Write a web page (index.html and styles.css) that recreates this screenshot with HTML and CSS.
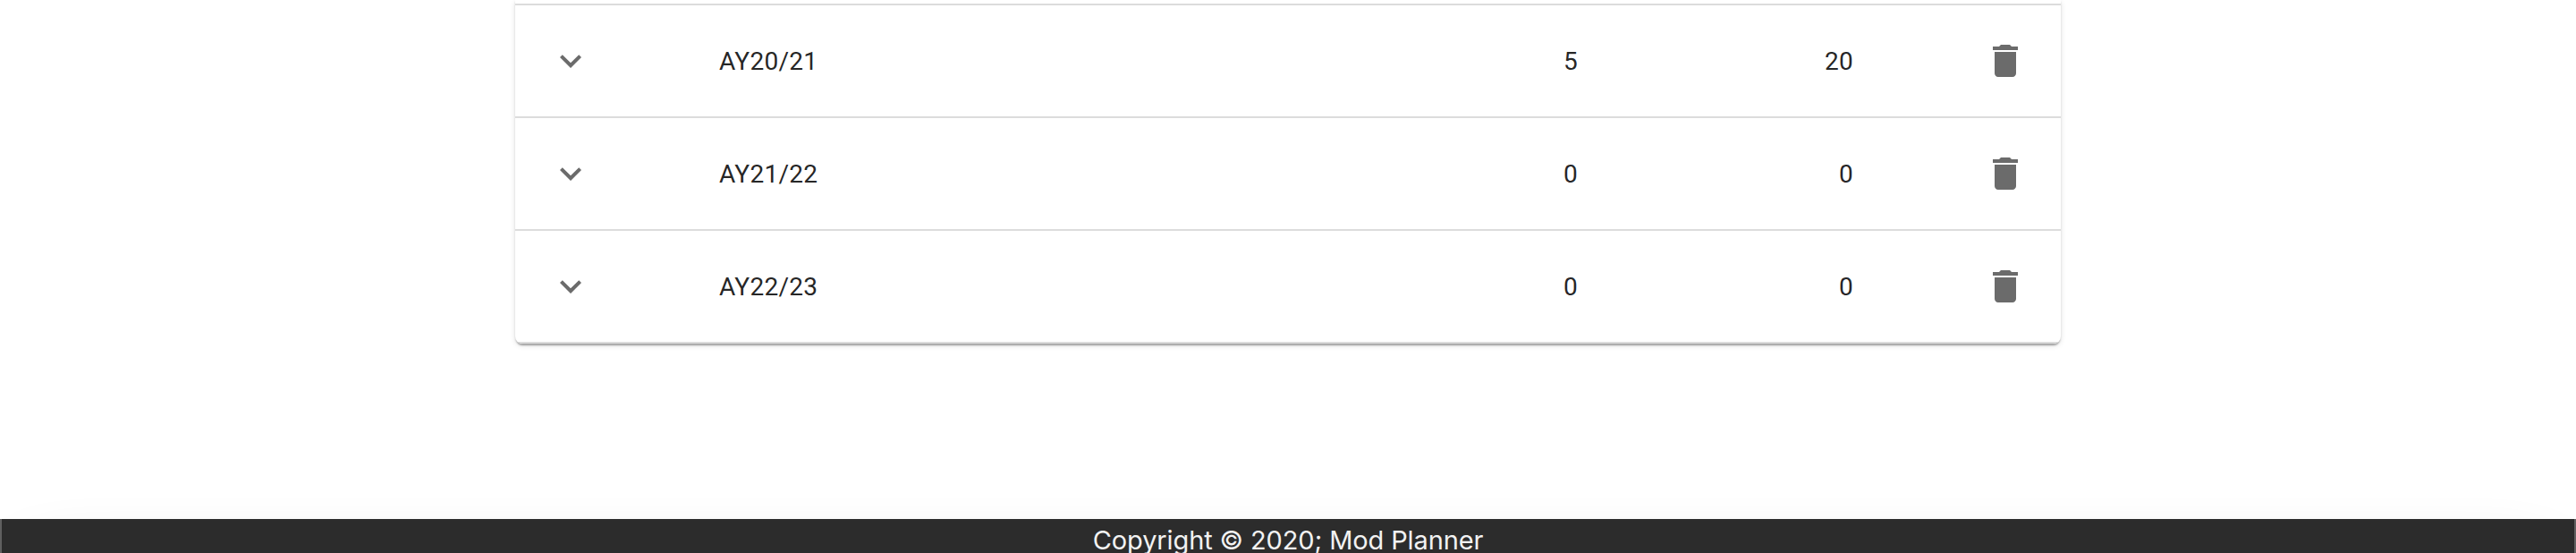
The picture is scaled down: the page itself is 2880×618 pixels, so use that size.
FILE: index.html
```
<!DOCTYPE html>
<html lang="en">
<head>
<meta charset="utf-8">
<title>Mod Planner</title>
<link rel="stylesheet" href="styles.css">
</head>
<body>
<svg class="sprite" aria-hidden="true">
  <symbol id="chevron" viewBox="0 0 24 24"><path d="M7.41 8.59L12 13.17l4.59-4.58L18 10l-6 6-6-6 1.41-1.41z"/></symbol>
  <symbol id="trash" viewBox="0 0 24 24"><path d="M6 19c0 1.1.9 2 2 2h8c1.1 0 2-.9 2-2V7H6v12zM19 4h-3.5l-1-1h-5l-1 1H5v2h14V4z"/></symbol>
</svg>
<main class="content">
  <div class="table">
    <div class="table-head"></div>
    <div class="row">
      <svg class="icon"><use href="#chevron"/></svg>
      <span class="year">AY20/21</span><span class="num">5</span><span class="num">20</span>
      <svg class="icon delete"><use href="#trash"/></svg>
    </div>
    <div class="row">
      <svg class="icon"><use href="#chevron"/></svg>
      <span class="year">AY21/22</span><span class="num">0</span><span class="num">0</span>
      <svg class="icon delete"><use href="#trash"/></svg>
    </div>
    <div class="row">
      <svg class="icon"><use href="#chevron"/></svg>
      <span class="year">AY22/23</span><span class="num">0</span><span class="num">0</span>
      <svg class="icon delete"><use href="#trash"/></svg>
    </div>
  </div>
</main>
<footer class="footer"><span class="copyright">Copyright © 2020; Mod Planner</span></footer>
</body>
</html>
```
FILE: styles.css
```
* { box-sizing: border-box; }
html { overflow: hidden; }
body {
  margin: 0;
  height: 618px;
  overflow: hidden;
  background: #fff;
  display: flex;
  flex-direction: column;
}
.sprite { display: none; }
.content { height: 580px; flex: none; }
.table {
  width: 1728px;
  margin: 0 auto;
  background: #fff;
  border-radius: 0 0 8px 8px;
  box-shadow: 0 4px 2px -2px rgba(0,0,0,.2), 0 2px 2px 0 rgba(0,0,0,.14), 0 2px 6px 0 rgba(0,0,0,.12);
  overflow: hidden;
}
.table-head { height: 6px; border-bottom: 2px solid #dcdcdc; }
.row {
  height: 126px;
  border-bottom: 2px solid #dcdcdc;
  padding: 0 38px;
  display: grid;
  grid-template-columns: 190px 690px 270px 308px 1fr;
  align-items: center;
  font: 28px/40px Roboto, sans-serif;
  letter-spacing: .3px;
  color: rgba(0,0,0,.87);
}
.year, .num { padding-top: 2px; }
.num { text-align: right; }
.icon { width: 48px; height: 48px; fill: #6b6b6b; }
.delete { justify-self: end; }
.footer {
  height: 200px;
  flex: none;
  background: #2c2c2c;
  border: solid #606060;
  border-width: 0 2px;
  box-shadow: 0 20px 80px -40px rgba(0,0,0,.3);
  text-align: center;
}
.copyright { display: block; font: 29px/48px Inter, sans-serif; letter-spacing: -.12px; color: #f2f2f2; }
```
